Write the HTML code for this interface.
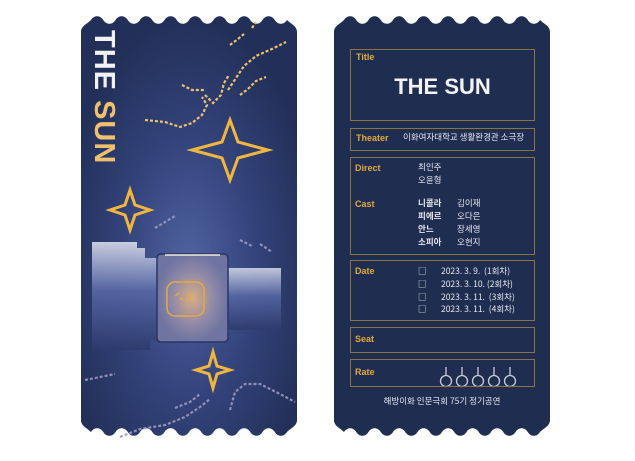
<!DOCTYPE html>
<html><head><meta charset="utf-8"><style>
body{margin:0;width:635px;height:461px;background:#fff;position:relative;overflow:hidden;font-family:"Liberation Sans","Noto Sans CJK KR",sans-serif}
.t{position:absolute;white-space:nowrap;line-height:1}
.g{color:#e2a93c;font-weight:bold;font-size:9px}
.w{color:#e6e8ef;font-size:8.5px;font-family:"Noto Sans CJK KR",sans-serif}
.box{position:absolute;border:1.5px solid #8a7440;box-sizing:border-box}
</style></head><body>
<svg width="635" height="461" style="position:absolute;left:0;top:0">
<defs>
<radialGradient id="rg" cx="0.5" cy="0.6" r="0.6">
<stop offset="0" stop-color="#5164a0"/><stop offset="0.5" stop-color="#34447c"/><stop offset="1" stop-color="#222f58"/>
</radialGradient>
<radialGradient id="glow" cx="0.5" cy="0.5" r="0.5">
<stop offset="0" stop-color="#d9ad80"/><stop offset="0.6" stop-color="#8f89a8"/><stop offset="1" stop-color="#6f74a0"/>
</radialGradient>
<linearGradient id="lg" x1="0" y1="0" x2="0" y2="1">
<stop offset="0" stop-color="#e4e6f2"/><stop offset="0.45" stop-color="#5a6aa8"/><stop offset="1" stop-color="#2c3a6c"/>
</linearGradient>
<path id="tk" d="M0,22 C0,16 6,14 10,10 c3,-5 9.25,-5 12.25,0 c3,5 9.25,5 12.25,0 c3,-5 9.25,-5 12.25,0 c3,5 9.25,5 12.25,0 c3,-5 9.25,-5 12.25,0 c3,5 9.25,5 12.25,0 c3,-5 9.25,-5 12.25,0 c3,5 9.25,5 12.25,0 c3,-5 9.25,-5 12.25,0 c3,5 9.25,5 12.25,0 c3,-5 9.25,-5 12.25,0 c3,5 9.25,5 12.25,0 c3,-5 9.25,-5 12.25,0 c3,5 9.25,5 12.25,0 c3,-5 9.25,-5 12.25,0 c3,5 9.25,5 12.25,0 C210,14 216,16 216,22 L216,410 C216,416 210,418 206,422 c-3,5 -9.25,5 -12.25,0 c-3,-5 -9.25,-5 -12.25,0 c-3,5 -9.25,5 -12.25,0 c-3,-5 -9.25,-5 -12.25,0 c-3,5 -9.25,5 -12.25,0 c-3,-5 -9.25,-5 -12.25,0 c-3,5 -9.25,5 -12.25,0 c-3,-5 -9.25,-5 -12.25,0 c-3,5 -9.25,5 -12.25,0 c-3,-5 -9.25,-5 -12.25,0 c-3,5 -9.25,5 -12.25,0 c-3,-5 -9.25,-5 -12.25,0 c-3,5 -9.25,5 -12.25,0 c-3,-5 -9.25,-5 -12.25,0 c-3,5 -9.25,5 -12.25,0 c-3,-5 -9.25,-5 -12.25,0 C6,418 0,416 0,410 Z"/>
</defs>
<g transform="translate(81,10)"><use href="#tk" fill="url(#rg)"/></g>
<g transform="translate(334,10)"><use href="#tk" fill="#1f2d50"/></g>
<!-- lamp -->
<path d="M92,242 h45 v6 h8 v10 h15 v82 h-10 v10 h-58 Z" fill="url(#lg)" opacity="0.85"/>
<rect x="226" y="268" width="55" height="62" fill="url(#lg)" opacity="0.8"/>
<rect x="157" y="254" width="71" height="88" rx="4" fill="url(#glow)" stroke="#2a3566" stroke-width="1.5"/>
<line x1="165" y1="255" x2="220" y2="255" stroke="#f4ecd8" stroke-width="1.5"/>
<rect x="167" y="282" width="37" height="34" rx="8" fill="none" stroke="#e8a840" stroke-width="1.5"/>
<path d="M175,296 l4,-3 M180,298 l3,2 M188,294 l3,5 M186,299 l2,2" stroke="#e8a840" stroke-width="1.3"/>
<!-- stars -->
<g fill="none" stroke="#f0b640" stroke-width="3">
<path d="M230,120 L238,142 L268,150 L238,158 L230,180 L222,158 L192,150 L222,142 Z"/>
<path d="M130,190 L135,205 L150,210 L135,215 L130,230 L125,215 L110,210 L125,205 Z"/>
<path d="M213,352 L217,366 L230,370 L217,374 L213,388 L209,374 L196,370 L209,366 Z"/>
</g>
<!-- dots -->
<g stroke="#f0c070" stroke-width="2.2" stroke-dasharray="3 2" fill="none">
<path d="M145,120 l20,2 l15,5 l12,-4 l10,-8 l5,-10 l-5,-8"/>
<path d="M205,95 l8,8 l8,-8 l3,-12 l5,-8"/>
<path d="M182,85 l10,5 l12,0"/>
<path d="M228,90 l8,-12 l8,-12 l12,-10 l18,-8 l12,-6"/>
<path d="M240,95 l8,-6 l8,-8 l10,-4"/>
<path d="M230,45 l8,-6 l6,-5 M252,28 l4,-6"/>
</g>
<g stroke="#9a98c0" stroke-width="2.2" stroke-dasharray="3 2" fill="none" opacity="0.9">
<path d="M240,240 l12,6 M260,244 l12,8"/>
<path d="M155,228 l10,-6 l10,-6"/>
<path d="M85,380 l30,-6"/>
<path d="M120,437 l20,-8 l25,-4 l20,-8 l15,-10 l10,-8"/>
<path d="M230,410 l5,-18 l10,-8 l15,0 l20,10 l15,8"/>
<path d="M175,408 l15,-6 l10,-8"/>
</g>
<!-- rate icons -->
<g fill="none" stroke="#c9ccd6" stroke-width="1.3">
<circle cx="446" cy="381" r="5.5"/><line x1="446" y1="367" x2="446" y2="375.5"/>
<circle cx="462" cy="381" r="5.5"/><line x1="462" y1="367" x2="462" y2="375.5"/>
<circle cx="478" cy="381" r="5.5"/><line x1="478" y1="367" x2="478" y2="375.5"/>
<circle cx="494" cy="381" r="5.5"/><line x1="494" y1="367" x2="494" y2="375.5"/>
<circle cx="510" cy="381" r="5.5"/><line x1="510" y1="367" x2="510" y2="375.5"/>
</g>
</svg>
<div class="t" style="left:89px;top:30px;writing-mode:vertical-rl;font-size:29px;font-weight:bold;letter-spacing:1px"><span style="color:#f2f2f4">THE </span><span style="color:#f0c070">SUN</span></div>

<div class="box" style="left:350px;top:49px;width:185px;height:72px"></div>
<div class="box" style="left:350px;top:128px;width:185px;height:23px"></div>
<div class="box" style="left:350px;top:157px;width:185px;height:98px"></div>
<div class="box" style="left:350px;top:260px;width:185px;height:61px"></div>
<div class="box" style="left:350px;top:327px;width:185px;height:26px"></div>
<div class="box" style="left:350px;top:359px;width:185px;height:28px"></div>

<div class="t g" style="left:356px;top:53px">Title</div>
<div class="t" style="left:350px;width:185px;text-align:center;top:76px;color:#f4f4f6;font-weight:bold;font-size:22px">THE SUN</div>
<div class="t g" style="left:356px;top:134px">Theater</div>
<div class="t w" style="left:403px;top:133px">이화여자대학교 생활환경관 소극장</div>
<div class="t g" style="left:355px;top:164px">Direct</div>
<div class="t w" style="left:418px;top:163px">최인주</div>
<div class="t w" style="left:418px;top:176px">오윤형</div>
<div class="t g" style="left:355px;top:200px">Cast</div>
<div class="t w" style="left:418px;top:199px;font-weight:bold">니콜라</div><div class="t w" style="left:457px;top:199px">김이재</div>
<div class="t w" style="left:418px;top:212px;font-weight:bold">피에르</div><div class="t w" style="left:457px;top:212px">오다은</div>
<div class="t w" style="left:418px;top:225px;font-weight:bold">안느</div><div class="t w" style="left:457px;top:225px">장세영</div>
<div class="t w" style="left:418px;top:238px;font-weight:bold">소피아</div><div class="t w" style="left:457px;top:238px">오현지</div>
<div class="t g" style="left:355px;top:267px">Date</div>
<div class="t w" style="left:418px;top:267px">□</div><div class="t w" style="left:441px;top:267px">2023. 3. 9.&nbsp;&nbsp;(1회차)</div>
<div class="t w" style="left:418px;top:280px">□</div><div class="t w" style="left:441px;top:280px">2023. 3. 10. (2회차)</div>
<div class="t w" style="left:418px;top:293px">□</div><div class="t w" style="left:441px;top:293px">2023. 3. 11.&nbsp;&nbsp;(3회차)</div>
<div class="t w" style="left:418px;top:305px">□</div><div class="t w" style="left:441px;top:305px">2023. 3. 11.&nbsp;&nbsp;(4회차)</div>
<div class="t g" style="left:355px;top:335px">Seat</div>
<div class="t g" style="left:355px;top:368px">Rate</div>
<div class="t w" style="left:334px;width:216px;text-align:center;top:397px">해방이화 인문극회 75기 정기공연</div>
</body></html>
